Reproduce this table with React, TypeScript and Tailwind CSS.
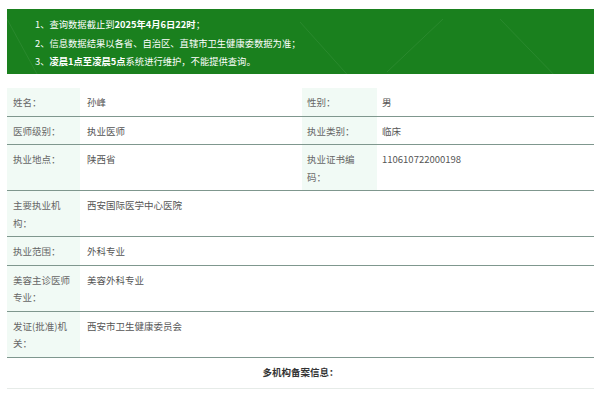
const font = { fontFamily: '"Microsoft YaHei", "Noto Sans CJK SC", sans-serif' }

type Row = { label: string; value: string; label2?: string; value2?: string }

const rows: Row[] = [
  { label: "姓名：", value: "孙峰", label2: "性别：", value2: "男" },
  { label: "医师级别：", value: "执业医师", label2: "执业类别：", value2: "临床" },
  { label: "执业地点：", value: "陕西省", label2: "执业证书编码：", value2: "110610722000198" },
  { label: "主要执业机构：", value: "西安国际医学中心医院" },
  { label: "执业范围：", value: "外科专业" },
  { label: "美容主诊医师专业：", value: "美容外科专业" },
  { label: "发证(批准)机关：", value: "西安市卫生健康委员会" },
]

function InfoRow({ row }: { row: Row }) {
  const cell = "pt-[6px] pb-[4px] leading-[17.5px]"
  return (
    <div className="grid grid-cols-[73px_222px_75px_1fr] border-b border-[#7f978e]">
      <div className={`${cell} bg-[#f1faf5] pl-[6px] pr-[5px] text-[#666]`}>{row.label}</div>
      {row.label2 ? (
        <>
          <div className={`${cell} pl-[7px] text-[#555]`}>{row.value}</div>
          <div className={`${cell} bg-[#f1faf5] pl-[5px] pr-[8px] text-[#666]`}>{row.label2}</div>
          <div className={`${cell} pl-[5px] text-[#555]`}>{row.value2}</div>
        </>
      ) : (
        <div className={`${cell} col-span-3 pl-[7px] text-[#555]`}>{row.value}</div>
      )}
    </div>
  )
}

export default function App() {
  return (
    <div className="w-[600px] h-[400px] bg-white overflow-hidden pt-[9px]" style={font}>
      {/* 顶部提示 */}
      <div className="relative ml-[7px] w-[587px] h-[65px] bg-[#1a801e] text-white text-[9.3px] leading-[18.5px] pl-[28px] pt-[6px] overflow-hidden">
        <svg className="absolute inset-0" width="587" height="65" viewBox="0 0 587 65">
          <g stroke="#ffffff" strokeOpacity="0.07" strokeWidth="1">
            <line x1="0" y1="10" x2="30" y2="65" />
            <line x1="293" y1="13" x2="346" y2="72" />
            <line x1="380" y1="63" x2="436" y2="10" />
            <line x1="493" y1="10" x2="553" y2="72" />
          </g>
        </svg>
        <p className="relative">1、查询数据截止到<b>2025年4月6日22时</b>；</p>
        <p className="relative">2、信息数据结果以各省、自治区、直辖市卫生健康委数据为准；</p>
        <p className="relative">3、<b>凌晨1点至凌晨5点</b>系统进行维护，不能提供查询。</p>
      </div>

      {/* 医师信息 */}
      <div className="ml-[7px] w-[587px] mt-[14px] text-[9.5px]">
        {rows.map((r) => (
          <InfoRow key={r.label} row={r} />
        ))}
        <div className="h-[31px] flex items-center justify-center border-b border-[#e6ebe8] text-[9.5px] font-bold text-[#333]">
          多机构备案信息：
        </div>
      </div>
    </div>
  )
}
